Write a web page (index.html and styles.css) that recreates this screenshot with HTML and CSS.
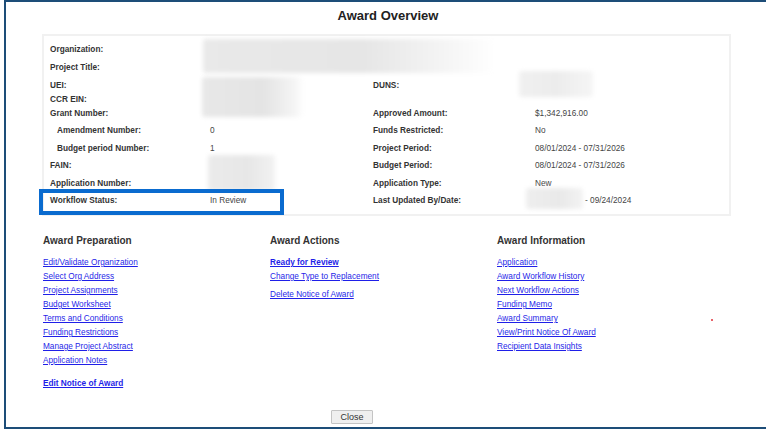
FILE: index.html
```html
<!DOCTYPE html>
<html>
<head>
<meta charset="utf-8">
<title>Award Overview</title>
<link rel="stylesheet" href="styles.css">
</head>
<body>
<div class="frame">
  <h1 class="title">Award Overview</h1>
  <div class="panel">
    <div class="row r1"><span class="lbl">Organization:</span><span class="val"></span><span></span><span></span></div>
    <div class="row r2"><span class="lbl">Project Title:</span><span class="val"></span><span></span><span></span></div>
    <div class="row r3"><span class="lbl">UEI:</span><span class="val"></span><span class="lbl">DUNS:</span><span class="val"></span></div>
    <div class="row r4"><span class="lbl">CCR EIN:</span><span class="val"></span><span></span><span></span></div>
    <div class="row r5"><span class="lbl">Grant Number:</span><span class="val"></span><span class="lbl">Approved Amount:</span><span class="val">$1,342,916.00</span></div>
    <div class="row r6"><span class="lbl sub">Amendment Number:</span><span class="val">0</span><span class="lbl">Funds Restricted:</span><span class="val">No</span></div>
    <div class="row r7"><span class="lbl sub">Budget period Number:</span><span class="val">1</span><span class="lbl">Project Period:</span><span class="val">08/01/2024 - 07/31/2026</span></div>
    <div class="row r8"><span class="lbl">FAIN:</span><span class="val"></span><span class="lbl">Budget Period:</span><span class="val">08/01/2024 - 07/31/2026</span></div>
    <div class="row r9"><span class="lbl">Application Number:</span><span class="val"></span><span class="lbl">Application Type:</span><span class="val">New</span></div>
    <div class="row r10"><span class="lbl">Workflow Status:</span><span class="val">In Review</span><span class="lbl">Last Updated By/Date:</span><span class="val upd">- 09/24/2024</span></div>

    <div class="redact red-org"></div>
    <div class="redact red-uei"></div>
    <div class="redact red-duns"></div>
    <div class="redact red-fain"></div>
    <div class="redact red-upd"></div>
    <div class="highlight"></div>
  </div>

  <div class="sections">
    <div class="col">
      <h2 class="head">Award Preparation</h2>
      <ul class="links">
        <li><a href="#">Edit/Validate Organization</a></li>
        <li><a href="#">Select Org Address</a></li>
        <li><a href="#">Project Assignments</a></li>
        <li><a href="#">Budget Worksheet</a></li>
        <li><a href="#">Terms and Conditions</a></li>
        <li><a href="#">Funding Restrictions</a></li>
        <li><a href="#">Manage Project Abstract</a></li>
        <li><a href="#">Application Notes</a></li>
        <li class="gap-big"><a href="#" class="strong">Edit Notice of Award</a></li>
      </ul>
    </div>
    <div class="col">
      <h2 class="head">Award Actions</h2>
      <ul class="links">
        <li><a href="#" class="strong">Ready for Review</a></li>
        <li><a href="#">Change Type to Replacement</a></li>
        <li class="gap-small"><a href="#">Delete Notice of Award</a></li>
      </ul>
    </div>
    <div class="col">
      <h2 class="head">Award Information</h2>
      <ul class="links">
        <li><a href="#">Application</a></li>
        <li><a href="#">Award Workflow History</a></li>
        <li><a href="#">Next Workflow Actions</a></li>
        <li><a href="#">Funding Memo</a></li>
        <li><a href="#">Award Summary</a></li>
        <li><a href="#">View/Print Notice Of Award</a></li>
        <li><a href="#">Recipient Data Insights</a></li>
      </ul>
      <span class="dot"></span>
    </div>
  </div>

  <div class="actions">
    <button class="close-btn" type="button">Close</button>
  </div>
</div>
</body>
</html>
```

FILE: styles.css
```css
html, body {
  margin: 0;
  padding: 0;
  background: #ffffff;
}

body {
  font-family: "Liberation Sans", Arial, sans-serif;
  color: #333333;
}

.frame {
  box-sizing: border-box;
  margin-left: 4px;
  width: 762px;
  height: 429px;
  border-top: 2px solid #1d4d78;
  border-left: 2px solid #1d4d78;
  border-bottom: 2px solid #1d4d78;
}

.title {
  margin: 0;
  padding-top: 6px;
  padding-left: 4px;
  font-size: 13px;
  line-height: 16px;
  font-weight: bold;
  text-align: center;
  color: #222222;
}

.panel {
  position: relative;
  box-sizing: border-box;
  margin: 10px 0 0 36px;
  width: 689px;
  border: 2px solid #f1f1f1;
  padding: 4px 6px 5px 6px;
}

.row {
  display: grid;
  grid-template-columns: 160px 163px 162px 1fr;
  align-items: center;
  font-size: 8.25px;
}

.r1 { height: 18px; }
.r2 { height: 19px; }
.r3 { height: 16px; }
.r4 { height: 12px; }
.r5 { height: 16px; }
.r6 { height: 18px; }
.r7 { height: 18px; }
.r8 { height: 17px; }
.r9 { height: 18px; }
.r10 { height: 17px; }

.lbl {
  font-weight: bold;
  color: #333333;
  white-space: nowrap;
}

.lbl.sub {
  padding-left: 7px;
}

.val {
  color: #444444;
  white-space: nowrap;
}

.val.upd {
  padding-left: 50px;
}

.redact {
  position: absolute;
  border-radius: 3px;
  filter: blur(2px);
}

.red-org {
  left: 159px;
  top: 3px;
  width: 292px;
  height: 34px;
  background: linear-gradient(90deg, #e9e9e9 0%, #e6e6e6 55%, #f3f3f3 80%, #ffffff 100%);
}

.red-uei {
  left: 158px;
  top: 41px;
  width: 102px;
  height: 40px;
  background: linear-gradient(90deg, #e8e8e8 0%, #e4e4e4 60%, #f4f4f4 90%, #ffffff 100%);
}

.red-duns {
  left: 475px;
  top: 35px;
  width: 74px;
  height: 26px;
  background: linear-gradient(90deg, #f0f0f0 0%, #ececec 50%, #f5f5f5 100%);
}

.red-fain {
  left: 164px;
  top: 119px;
  width: 67px;
  height: 36px;
  background: linear-gradient(90deg, #ebebeb 0%, #e7e7e7 60%, #f2f2f2 100%);
}

.red-upd {
  left: 482px;
  top: 152px;
  width: 57px;
  height: 21px;
  background: linear-gradient(90deg, #eeeeee 0%, #e9e9e9 60%, #f3f3f3 100%);
}

.highlight {
  position: absolute;
  box-sizing: border-box;
  left: -5px;
  top: 153px;
  width: 245px;
  height: 26px;
  border: 4px solid #0a6bcf;
}

.sections {
  display: flex;
  padding-left: 37px;
  margin-top: 18px;
}

.col {
  position: relative;
  width: 227px;
}

.head {
  margin: 0;
  font-size: 10px;
  line-height: 14px;
  font-weight: bold;
  color: #333333;
}

.links {
  list-style: none;
  margin: 8px 0 0 0;
  padding: 0;
}

.links li {
  font-size: 8.25px;
  line-height: 14px;
  white-space: nowrap;
}

.links a {
  color: #1f1fe8;
  text-decoration: underline;
}

.links a.strong {
  font-weight: bold;
}

.links li.gap-big {
  margin-top: 9px;
}

.links li.gap-small {
  margin-top: 4px;
}

.dot {
  position: absolute;
  left: 214px;
  top: 85px;
  width: 2px;
  height: 2px;
  border-radius: 50%;
  background: #e0303a;
}

.actions {
  margin-top: 15px;
  padding-left: 325px;
}

.close-btn {
  box-sizing: border-box;
  width: 42px;
  height: 14px;
  padding: 0;
  font-family: "Liberation Sans", Arial, sans-serif;
  font-size: 9px;
  line-height: 12px;
  color: #333333;
  background: #efefef;
  border: 1px solid #c4c4c4;
  border-radius: 1px;
}
```
